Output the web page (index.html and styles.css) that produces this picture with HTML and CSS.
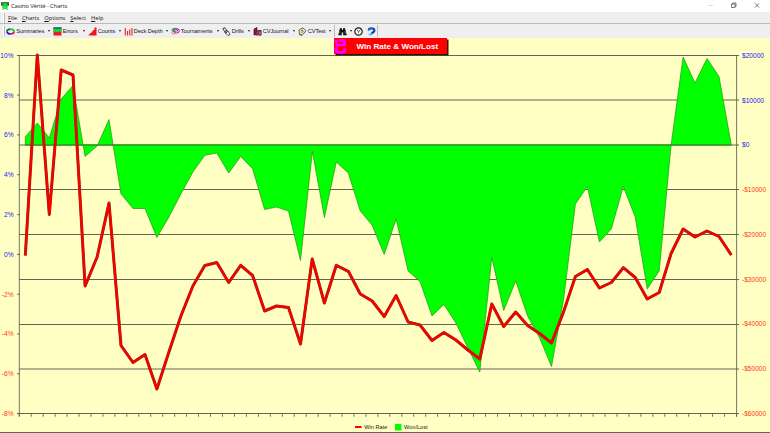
FILE: index.html
```
<!DOCTYPE html>
<html lang="en">
<head>
<meta charset="utf-8">
<title>Casino Vérité - Charts</title>
<link rel="stylesheet" href="styles.css">
</head>
<body>
<div class="window">
  <header class="titlebar">
    <svg class="appicon" width="8" height="8" viewBox="0 0 8 8"><path d="M0 0h8v3.500H0z" fill="#178c30"/><path d="M0 1h2v2.500H0zM6 1h2v2.500H6z" fill="#264b2c"/><circle cx="4" cy="4.200" r="2.900" fill="#20ef3b"/><path d="M0 1h2M6 1h2" stroke="#e34b28"/><path d="M2.300 3h1M5 3h1" stroke="#123" stroke-width=".8"/><path d="M1 7.500l2-1M7 7.500l-2-1" stroke="#283" stroke-width=".7"/></svg>
    <span class="caption">Casino Vérité - Charts</span>
    <svg class="controls" width="60" height="12" viewBox="0 0 60 12" fill="none" stroke="#444" stroke-width=".7"><path d="M0 5.500h5" stroke="#ccc"/><path d="M23.500 4h3.500v3.500h-3.500zM24.500 4V3h3.500v3.500h-1"/><path d="M47 3.300l4.200 4.200M51.200 3.300L47 7.500"/></svg>
  </header>
  <nav class="menubar">
    <i class="grip"></i>
    <span><u>F</u>ile</span><span><u>C</u>harts</span><span><u>O</u>ptions</span><span><u>S</u>elect</span><span><u>H</u>elp</span>
  </nav>
  <div class="toolbar">
    <i class="grip"></i>
    <div class="tool summaries"><svg width="9" height="9" viewBox="0 0 9 9" fill="none" stroke-width="1.800"><path d="M1 4.500a3.500 2.400 0 0 1 3.500-2.400" stroke="#0a6c4c"/><path d="M4.500 2.100a3.500 2.400 0 0 1 3.500 2.400" stroke="#15d22c"/><path d="M8 4.500a3.500 2.400 0 0 1-3.500 2.400" stroke="#e1162a"/><path d="M4.500 6.900A3.500 2.400 0 0 1 1 4.500" stroke="#1717d5"/></svg><span>Summaries</span><b></b></div>
    <div class="tool errors"><svg width="9" height="9" viewBox="0 0 9 9"><path d="M.5.500h8v8h-8z" fill="#f01818"/><path d="M.5.500h8v5l-2-1-2 1-2-1-2 1z" fill="#12db25"/><path d="M.5.500h8v1.200h-8z" fill="#1440d4"/></svg><span>Errors</span><b></b></div>
    <div class="tool counts"><svg width="9" height="9" viewBox="0 0 9 9"><path d="M.5 8.500V7.500H2V6h1.500V4.500H5V3h1.500V.5h2v8z" fill="#ee1515"/></svg><span>Counts</span><b></b></div>
    <div class="tool depth"><svg width="9" height="9" viewBox="0 0 9 9" fill="#ee2020"><path d="M.8 1h1.100v7.500H.8zM3 4h1.100v4.500H3zM5.200 2.500h1.100v6H5.200zM7.400 1h1.100v7.500H7.400z"/></svg><span>Deck Depth</span><b></b></div>
    <div class="tool tournaments"><svg width="9" height="9" viewBox="0 0 9 9" fill="none"><ellipse cx="5.500" cy="3.800" rx="2.900" ry="2.200" fill="#e9c6df" stroke="#c52499"/><path d="M.8 3.500c1-2 3-2 4-2" stroke="#239b39" stroke-width="1.300"/><path d="M.8 5.500c2-2.500 3.500-2 4.500-.5M5 2l2 2" stroke="#3740b1"/><path d="M1 6.800h3.500" stroke="#d88328"/></svg><span>Tournaments</span><b></b></div>
    <div class="tool drills"><svg width="9" height="9" viewBox="0 0 9 9" fill="#fff" stroke="#222" stroke-width=".8"><path d="M.8 1.500L3 .8l2.500 4-2 1.500zM3.500 3.500l3 1 1.500 3-2 1-2-2z"/><path d="M1.500 2l1-.3" stroke="#d22"/></svg><span>Drills</span><b></b></div>
    <div class="tool journal"><svg width="9" height="9" viewBox="0 0 9 9" stroke="#371722" stroke-width=".7"><path d="M1 2l3-1.500v7L1 8z" fill="#a8112e"/><path d="M3 4l5-.7V8H3z" fill="#d3324a"/><path d="M6 4h2v4H6z" fill="#aaa"/></svg><span>CVJournal</span><b></b></div>
    <div class="tool test"><svg width="9" height="9" viewBox="0 0 9 9" stroke="#333" stroke-width=".7"><path d="M1 3l4-2.200 3 3-4 4.700-2.500-1.500z" fill="#eee7ad"/><path d="M3 4l2-1M3.500 5.500l2-1M1 7.500l3 .7" fill="none"/></svg><span>CVTest</span><b></b></div>
    <i class="divider"></i>
    <div class="tool find"><svg width="9" height="9" viewBox="0 0 9 9"><path d="M2 1.200h2V3h1V1.200h2L8.800 8.200H5.200V5.500H3.800v2.700H.2z" fill="#111"/><path d="M1.500 6.500l.7-2M7.500 6.500l-.7-2" stroke="#aaa" stroke-width=".6"/></svg><b></b></div>
    <div class="tool timer"><svg width="9" height="9" viewBox="0 0 9 9" fill="none" stroke="#161616"><circle cx="4.500" cy="4.500" r="3.700" fill="#fff" stroke-width="1.200"/><path d="M3 2.700l1.500 2L6.500 3" stroke-width=".8"/><path d="M4.500 4.700V6.500" stroke="#b33" stroke-width=".8"/></svg></div>
    <div class="tool help"><svg width="9" height="9" viewBox="0 0 9 9" fill="none"><path d="M1.800 3.500c0-2.900 5.600-2.900 5.600 0 0 1.800-2.300 1.600-2.600 3.300" stroke="#0d3fc0" stroke-width="2.200"/><path d="M1.800 7.500h3.500" stroke="#49b5e8" stroke-width="1.500"/><path d="M2 3.300c.5-1.800 3-1.800 3.500-.8" stroke="#50bce8" stroke-width=".7"/></svg></div>
    <i class="edge"></i>
  </div>
  <main class="panel">
    <svg class="chart" width="770" height="395" viewBox="0 38 770 395">
      <g class="grid">
        <path d="M17 55.500H739M19 100H739M19 145H739M19 189.500H739M19 234.500H739M19 279.500H739M19 324.500H739M19 369H739M17 413.500H739"/>
      </g>
      <path class="area" d="M25.300 145V136.700L37.300 123L49.300 138L61.200 99L73 85.500L85.100 156.500L97.100 146L109 119.500L121 194L133 208.500L145 208.500L156.900 237.500L168.900 217L180.900 194L192.900 172L204.800 155.300L216.800 153L228.700 173L240.700 156.500L252.600 168.700L264.600 209.500L276.500 207L288.500 211L300.500 260.500L312.400 151.500L324.400 217.500L336.300 162L348.300 173L360.300 211L372.200 225.300L384.200 254.500L396.100 219L408.100 271L420 281.500L432 316L443.900 304.500L455.900 323L467.900 348L479.800 372L491.800 257.500L503.700 310.500L515.700 281L527.600 316L539.600 338L551.500 366.500L563.500 300L575.400 204L587.400 186.500L599.400 242L611.300 229L623.300 186.500L635.200 217L647.200 289L659.200 271L671.100 145L683.100 57L695 83L707 58.500L719 76.500L731.300 145Z"/>
      <path class="zero" d="M25 145H731"/>
      <path class="axis" d="M19.300 55V416.500M736.600 55V416.500M17 95.100h3M17 134.900h3M17 174.700h3M17 214.600h3M17 254.400h3M17 294.200h3M17 334h3M17 373.800h3"/>
      <path class="ticks" d="M18.800 415.200H737"/>
      <path class="outline" d="M25.300 255.500L37.300 55L49.300 214.500L61.200 70L73 75L85.100 286L97.100 257L109 203L121 345.500L133 362.500L145 354.500L156.900 389L168.900 352L180.900 316L192.900 286L204.800 265.500L216.800 262.500L228.700 282.500L240.700 265.300L252.600 275.500L264.600 311L276.500 306L288.500 307.500L300.500 344L312.200 259L324.400 303L336.300 265.300L348.300 271.300L360.300 294L372.200 301L384.200 316.500L396.100 295.500L408.100 322L420 325L432 340.500L443.900 332.500L455.900 340L467.900 350L479.800 359L491.800 304L503.700 326.500L515.700 312L527.600 325.500L539.600 333.500L551.500 343L563.500 312L575.400 276.500L587.400 269.500L599.400 288L611.300 282.500L623.300 267.700L635.200 277.500L647.200 299L659.200 292.500L671.100 253.500L683.100 229L695 237L707 231L719 236.500L731.300 255"/>
      <path class="rate" d="M25.300 255.500L37.300 55L49.300 214.500L61.200 70L73 75L85.100 286L97.100 257L109 203L121 345.500L133 362.500L145 354.500L156.900 389L168.900 352L180.900 316L192.900 286L204.800 265.500L216.800 262.500L228.700 282.500L240.700 265.300L252.600 275.500L264.600 311L276.500 306L288.500 307.500L300.500 344L312.200 259L324.400 303L336.300 265.300L348.300 271.300L360.300 294L372.200 301L384.200 316.500L396.100 295.500L408.100 322L420 325L432 340.500L443.900 332.500L455.900 340L467.900 350L479.800 359L491.800 304L503.700 326.500L515.700 312L527.600 325.500L539.600 333.500L551.500 343L563.500 312L575.400 276.500L587.400 269.500L599.400 288L611.300 282.500L623.300 267.700L635.200 277.500L647.200 299L659.200 292.500L671.100 253.500L683.100 229L695 237L707 231L719 236.500L731.300 255"/>
      <g class="labels left">
        <text x="13.500" y="57.700">10%</text><text x="13.500" y="97.500">8%</text><text x="13.500" y="137.300">6%</text><text x="13.500" y="177.100">4%</text><text x="13.500" y="217">2%</text><text x="13.500" y="256.800">0%</text>
        <g class="negative"><text x="13.500" y="296.600">-2%</text><text x="13.500" y="336.400">-4%</text><text x="13.500" y="376.200">-6%</text><text x="13.500" y="416">-8%</text></g>
      </g>
      <g class="labels">
        <text x="742" y="57.700">$20000</text><text x="742" y="102.500">$10000</text><text x="742" y="147.300">$0</text>
        <g class="negative"><text x="742" y="192">-$10000</text><text x="742" y="236.800">-$20000</text><text x="742" y="281.600">-$30000</text><text x="742" y="326.400">-$40000</text><text x="742" y="371.200">-$50000</text><text x="742" y="416">-$60000</text></g>
      </g>
      <g class="legend"><path d="M355 426h6.500v2H355z" fill="#f00"/><text x="364.300" y="429.200">Win Rate</text><path d="M395 424h6.500v6.500H395z" fill="#0f0"/><text x="404" y="429.200">Won/Lost</text></g>
      <path class="baseline" d="M0 432.500H770"/>
    </svg>
    <div class="banner"><svg width="13" height="15" viewBox="0 0 13 15" fill="none" stroke="#f0f" stroke-width="2.800"><path d="M.5 1.500L3.500 3.500M5 1.500H9Q10.600 1.500 10.600 3.500V5.800H1.500M4 9Q1.800 9 1.800 11T4.500 13.300H8.500Q10.600 13.300 10.600 11.500V9.500"/></svg><span>Win Rate &amp; Won/Lost</span></div>
  </main>
</div>
</body>
</html>
```
FILE: styles.css
```
* { box-sizing: border-box; }
body { margin: 0; overflow: hidden; }
.window {
  width: 770px;
  height: 433px;
  display: flex;
  flex-direction: column;
  background: #ffffc3;
  font-family: "Liberation Sans", Arial, sans-serif;
}
.titlebar {
  height: 12px;
  flex: none;
  display: flex;
  align-items: center;
  background: #fff;
}
.appicon { margin: 0 2px 1px 1px; }
.caption {
  font: 6px/11px "Open Sans", sans-serif;
  letter-spacing: -.17px;
  color: #222;
  white-space: nowrap;
}
.controls { margin-left: auto; margin-right: 2px; }
.menubar {
  height: 12px;
  flex: none;
  display: flex;
  align-items: center;
  gap: 5px;
  padding: 1px 0 0 2.500px;
  background: #efefef;
  border-bottom: 1px solid #bbb;
  font: 5.700px/10px "Open Sans", sans-serif;
  color: #111;
}
.menubar u { text-decoration-thickness: .5px; text-underline-offset: 1px; }
.menubar .grip { margin-right: -1.500px; }
.grip {
  width: 2px;
  height: 10px;
  flex: none;
  border-right: 1px solid #bbb;
  background: #fff;
}
.toolbar {
  height: 14px;
  flex: none;
  display: flex;
  align-items: center;
  padding-left: 2.500px;
  font-size: 5.700px;
  letter-spacing: -.09px;
  color: #151515;
  background: #efefef;
}
.tool {
  display: flex;
  align-items: center;
  height: 13px;
  flex: none;
  white-space: nowrap;
}
.tool svg { flex: none; }
.tool span { margin-left: 1.200px; }
.tool b {
  margin-left: auto;
  margin-right: 3px;
  border-left: 1.500px solid transparent;
  border-right: 1.500px solid transparent;
  border-top: 2px solid #222;
}
.summaries { width: 46.500px; margin-left: 1.500px; }
.errors { width: 35px; }
.counts { width: 36px; }
.depth { width: 47px; }
.tournaments { width: 51px; }
.drills { width: 31px; }
.journal { width: 45px; }
.test { width: 36px; }
.divider { width: 1px; height: 12px; background: #bbb; }
.find { width: 18px; padding-left: 3px; }
.find b { margin-right: 1px; }
.timer { width: 14px; padding-left: 1px; }
.help { width: 10px; }
.edge { width: 1px; height: 12px; background: #bbb; }
.panel { position: relative; width: 770px; height: 395px; background: #ffffc3; }
.chart { display: block; }
.grid path { fill: none; stroke: #656557; stroke-width: 1; }
.area { fill: #0f0; stroke: #259316; stroke-width: .7; }
.zero { stroke: #26861d; stroke-width: .8; fill: none; }
.axis { stroke: #656557; stroke-width: .9; fill: none; }
.ticks { stroke: #656557; stroke-width: 3; stroke-dasharray: .9 11.055; fill: none; }
.outline { stroke: #8a3513; stroke-width: 3; fill: none; stroke-linejoin: round; }
.rate { stroke: #f40000; stroke-width: 2.300; fill: none; stroke-linejoin: round; }
.labels { font-size: 6.600px; fill: #2020ee; }
.labels .negative { fill: #ff3822; }
.left { text-anchor: end; }
.legend { font-size: 5.600px; fill: #222; }
.baseline { stroke: #656557; fill: none; }
.banner {
  position: absolute;
  left: 334px;
  top: 0;
  width: 113px;
  height: 16px;
  display: flex;
  align-items: center;
  background: #f00;
  color: #fff;
  font: bold 8.100px/15px "Liberation Sans", Arial, sans-serif;
  white-space: nowrap;
  box-shadow: 1.500px 1.500px 0 #351006;
}
.banner span { margin-left: 9.500px; }
```
